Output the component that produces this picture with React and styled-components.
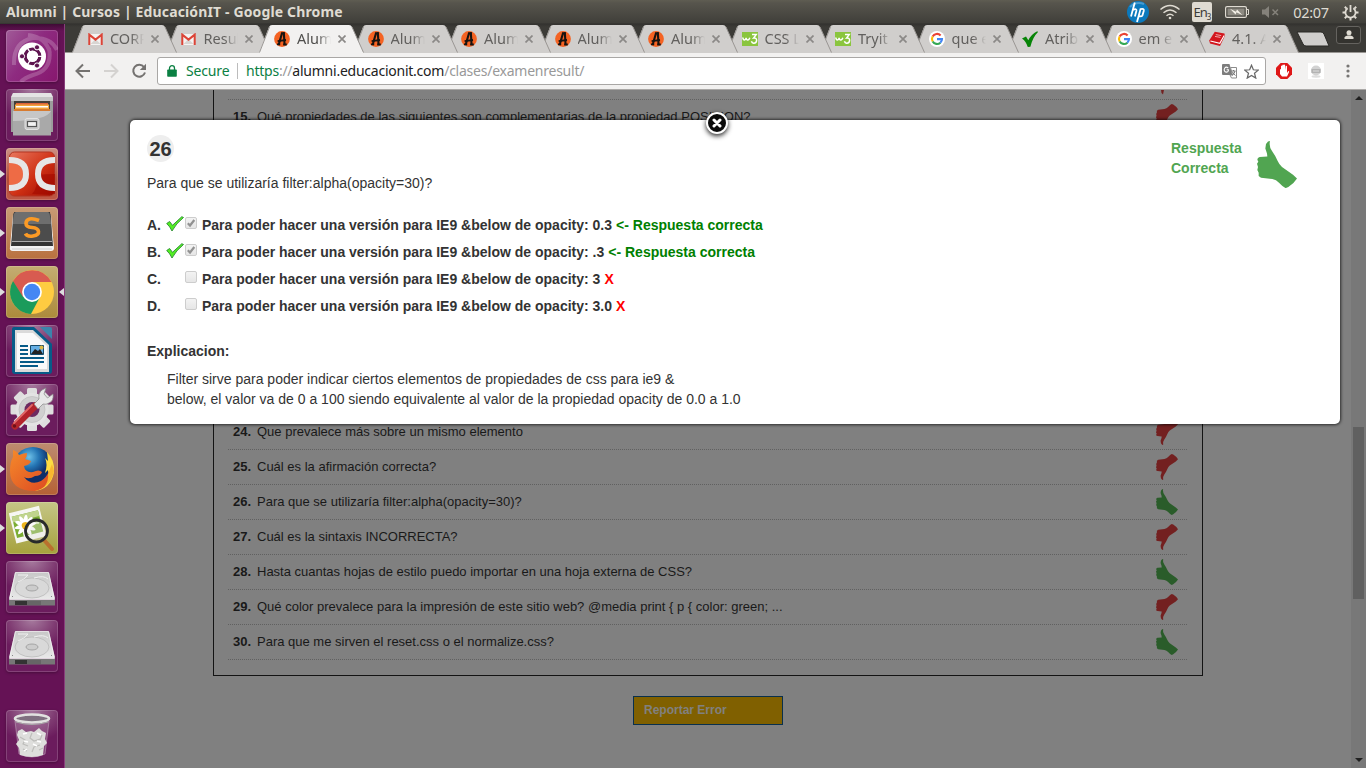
import React from 'react';
import styled, { createGlobalStyle } from 'styled-components';

const GlobalStyle = createGlobalStyle`
  *, *::before, *::after { box-sizing: border-box; }
  body { margin: 0; overflow: hidden; }
  svg { display: block; flex: none; }
`;

const UI_FONT = '"Noto Sans", "Open Sans", sans-serif';
const WEB_FONT = '"Liberation Sans", Arial, sans-serif';

const Desktop = styled.div`
  display: flex;
  flex-direction: column;
  width: 1366px;
  height: 768px;
  overflow: hidden;
  background: #3c3b37;
`;

/* ---------- system panel ---------- */
const Panel = styled.header`
  display: flex;
  align-items: center;
  justify-content: space-between;
  height: 24px;
  flex: none;
  padding: 0 4px 0 6px;
  background: linear-gradient(#5f5d52, #57554d 12%, #403f3a 94%, #33322f);
  font-family: ${UI_FONT};
  color: #dfdbd2;
`;
const WindowTitle = styled.div`
  font-size: 14px;
  font-weight: 700;
  line-height: 24px;
  white-space: nowrap;
  letter-spacing: 0.14px;
`;
const Indicators = styled.div`
  display: flex;
  align-items: center;
`;
const Slot = styled.div`
  display: flex;
  justify-content: center;
  align-items: center;
  width: ${(p) => p.$w}px;
  height: 24px;
`;
const Clock = styled.span`
  font-size: 14.5px;
  letter-spacing: -0.35px;
`;
const Keyboard = styled.div`
  width: 20px;
  height: 20px;
  border-radius: 2px;
  background: #dfdbd2;
  color: #3c3b37;
  font-size: 13px;
  line-height: 20px;
  text-align: center;
  letter-spacing: -1px;
  white-space: nowrap;
  sub { font-size: 8px; line-height: 0; vertical-align: -3px; }
`;

const Workspace = styled.div`
  display: flex;
  flex: 1;
  min-height: 0;
`;

/* ---------- launcher ---------- */
const Launcher = styled.nav`
  display: flex;
  flex-direction: column;
  gap: 7px;
  width: 65px;
  flex: none;
  padding-top: 6px;
  background: linear-gradient(#3f0b35, #651255 7px);
  border-right: 1px solid #883e7b;
`;
const Tile = styled.div`
  position: relative;
  width: 52px;
  height: 52px;
  flex: none;
  margin-left: 6px;
  margin-top: ${(p) => (p.$gap ? 31 : 0)}px;
  border-radius: 4px;
  background: ${(p) => p.$bg || 'radial-gradient(ellipse 75% 60% at 50% 0, #a67a9e, #7f3b72 60%, #6b1c5d)'};
  box-shadow: inset 0 0 0 1px rgba(255, 255, 255, 0.17), 0 1px 3px rgba(0, 0, 0, 0.3);
`;
const Pip = styled.i`
  position: absolute;
  top: 22px;
  ${(p) => (p.$right ? 'right: -6px; border-right: 5px solid #ddd;' : 'left: -6px; border-left: 5px solid #ddd;')}
  border-top: 4.5px solid transparent;
  border-bottom: 4.5px solid transparent;
`;

/* ---------- browser ---------- */
const Browser = styled.main`
  display: flex;
  flex-direction: column;
  flex: 1;
  min-width: 0;
`;
const TabStrip = styled.div`
  display: flex;
  height: 29px;
  flex: none;
  padding: 1px 5px 0 7px;
  background: linear-gradient(#33322f, #3c3b37 3px);
  border-bottom: 1px solid #999693;
  isolation: isolate;
`;
const TabBox = styled.div`
  position: relative;
  z-index: ${(p) => p.$z};
  width: 106px;
  height: 28px;
  flex: none;
  margin-right: -12.5px;
`;
const TabShape = styled.svg`
  position: absolute;
  inset: 0;
`;
const TabRow = styled.div`
  position: relative;
  display: flex;
  align-items: center;
  height: 27px;
  padding-left: 15px;
`;
const TabLabel = styled.span`
  width: 34px;
  margin: 0 7px 0 7px;
  padding-bottom: 1px;
  overflow: hidden;
  white-space: nowrap;
  font: 14.5px/25px ${UI_FONT};
  color: ${(p) => (p.$active ? '#504f4d' : '#62605e')};
  mask-image: linear-gradient(90deg, #000 60%, transparent 100%);
`;
const NewTab = styled.svg`
  margin: 6px 0 0 8px;
`;
const UserButton = styled.div`
  display: flex;
  justify-content: center;
  align-items: center;
  width: 25px;
  height: 18px;
  margin: 1px 0 0 auto;
  border: 1px solid #65635f;
  border-radius: 3px;
  background: #34332f;
`;
const Toolbar = styled.div`
  display: flex;
  align-items: center;
  height: 37px;
  flex: none;
  padding: 0 10px 0 10px;
  background: #f2f1f0;
  border-bottom: 1px solid #aaa8a6;
`;
const NavButtons = styled.div`
  display: flex;
  gap: 12px;
  width: 82px;
`;
const Omnibox = styled.div`
  display: flex;
  align-items: center;
  width: 1109px;
  height: 28px;
  padding: 0 6px 0 9px;
  border: 1px solid #a9a7a5;
  border-radius: 3px;
  background: #fff;
  font: 14px/26px ${UI_FONT};
  white-space: nowrap;
`;
const Secure = styled.span`
  width: 51px;
  margin-left: 9px;
  color: #0b8043;
  letter-spacing: -0.15px;
`;
const Divider = styled.i`
  width: 1px;
  height: 16px;
  background: #bcbcbc;
`;
const Url = styled.span`
  flex: 1;
  margin-left: 8px;
  color: #999;
  letter-spacing: -0.24px;
  em { font-style: normal; color: #0b8043; }
  b { font-weight: 400; color: #222; }
`;
const OmniIcons = styled.div`
  display: flex;
  align-items: center;
  gap: 7px;
`;
const Extensions = styled.div`
  display: flex;
  align-items: center;
  justify-content: space-between;
  flex: 1;
  padding-left: 10px;
`;

/* ---------- page ---------- */
const Viewport = styled.section`
  position: relative;
  display: flex;
  flex: 1;
  min-height: 0;
  overflow: hidden;
  background: #808080;
  font-family: ${WEB_FONT};
`;
const Page = styled.div`
  display: flex;
  flex-direction: column;
  flex: 1;
  overflow: hidden;
`;
const ResultBox = styled.div`
  width: 990px;
  height: 586px;
  flex: none;
  margin-left: 148px;
  padding: 0 15px 0 14px;
  border: solid #131313;
  border-width: 0 1px 1px;
`;
const Row = styled.div`
  display: flex;
  align-items: flex-start;
  height: ${(p) => p.$h || 35}px;
  padding: ${(p) => (p.$h ? 0 : 4)}px 9px 0 5px;
  overflow: hidden;
  border-bottom: 1px dotted #606060;
  font-size: 13px;
  line-height: 26px;
  color: #191919;
`;
const RowNumber = styled.b`
  width: 24px;
`;
const RowText = styled.span`
  flex: 1;
`;
const HiddenRows = styled.div`
  height: ${(p) => p.$rows * 35}px;
`;
const ReportButton = styled.button`
  width: 150px;
  height: 29px;
  margin: 20px 0 0 568px;
  padding: 0 0 2px 10px;
  border: 1px solid #09304d;
  border-radius: 0;
  background: #806000;
  color: #808080;
  font: 700 12px ${WEB_FONT};
  text-align: left;
`;
const Scrollbar = styled.div`
  display: flex;
  flex-direction: column;
  align-items: center;
  width: 15px;
  padding: 6px 0;
  background: #787878;
`;
const ScrollThumb = styled.div`
  width: 11px;
  height: 172px;
  margin: 327px 0 auto;
  background: #606060;
`;

const Modal = styled.article`
  position: absolute;
  left: 65px;
  top: 30px;
  width: 1210px;
  height: 304px;
  padding: 15px 17px;
  border-radius: 5px;
  background: #fff;
  box-shadow: 0 0 3px 1px rgba(0, 0, 0, 0.65);
  color: #333;
  font-size: 14px;
  line-height: 20px;
`;
const CloseButton = styled.div`
  position: absolute;
  left: 576px;
  top: -8px;
  display: flex;
  align-items: center;
  justify-content: center;
  width: 22px;
  height: 22px;
  border: 2px solid #fff;
  border-radius: 50%;
  background: #0b0b0b;
  box-shadow: 0 2px 5px rgba(0, 0, 0, 0.85);
`;
const ModalHead = styled.div`
  display: flex;
  justify-content: space-between;
  height: 38px;
`;
const Badge = styled.div`
  width: 27px;
  height: 27px;
  border-radius: 50%;
  background: #eee;
  font-size: 20px;
  font-weight: 700;
  line-height: 28px;
  text-align: center;
`;
const Verdict = styled.div`
  display: flex;
  gap: 15px;
  height: 55px;
  padding: 3px 26px 0 0;
  color: #51a551;
  font-weight: 700;
  p { margin: 0; width: 71px; }
  svg { margin-top: 3px; }
`;
const Answers = styled.ul`
  margin: 22px 0 0;
  padding: 0;
  list-style: none;
`;
const Answer = styled.li`
  display: flex;
  height: 27px;
  font-weight: 700;
`;
const Letter = styled.span`
  width: 19px;
`;
const Mark = styled.span`
  width: 19px;
  padding-top: 1px;
`;
const Check = styled.span`
  width: 12px;
  height: 12px;
  margin: 2px 5px 0 0;
  border: 1px solid #cdcdcd;
  border-radius: 2px;
  background: linear-gradient(#f3f3f3, #e6e6e6);
`;
const Hint = styled.span`
  margin-left: 4px;
  color: ${(p) => (p.$ok ? '#008000' : '#f00')};
`;
const Explain = styled.h4`
  margin: 18px 0 8px;
  font-size: 14px;
  line-height: 20px;
`;
const ExplainText = styled.p`
  margin: 0 0 0 20px;
`;

/* ---------- drawings ---------- */
const Thumb = ({ size = 22, color, down }) => (
  <svg width={size} height={size * 1.18} viewBox="0 0 120 141">
    <path
      fill={color}
      transform={down ? 'translate(0 141) scale(1 -1)' : undefined}
      d="M39 0 L33 1 L27 9 L25 22 L30 37 L31 46 L8 48 Q1 50 1 56 L4 62 L0 68 L3 78 L1 87 L5 95 L5 105 L12 110 L46 114 Q58 116 66 125 Q78 138 86 141 L94 138 Q110 128 120 112 L108 101 L75 78 Q67 71 62 60 Q55 43 46 31 Q35 16 39 0Z"
    />
  </svg>
);

const Gmail = () => (
  <svg width="15" height="12" viewBox="0 0 15 12">
    <path fill="#f4f3f2" d="M1 1h13v11H1z" />
    <path fill="#d8d5d2" d="M2.5 11 7.5 6l5 5z" />
    <path fill="none" stroke="#dc4437" strokeWidth="2" d="M1.3 12V1.6l6.2 5 6.2-5V12" />
  </svg>
);
const Alumni = () => (
  <svg width="16" height="16" viewBox="0 0 16 16">
    <circle cx="8" cy="8" r="7.9" fill="#f46323" />
    <path fill="none" stroke="#171310" strokeWidth="2.1" d="M4.600 14 8 2.200M9.800 1.200 10.600 14" />
    <path fill="none" stroke="#171310" strokeWidth="1.800" d="M7 2.200h3.800M3.600 10.200 12 9M3 13.300h3.200M9.200 13.500h3.600" />
  </svg>
);
const W3 = () => (
  <svg width="16" height="14" viewBox="0 0 16 14">
    <path fill="#8ac53e" d="M0 0h16v14H0z" />
    <path fill="none" stroke="#fff" strokeWidth="1.5" d="M.8 5.5q.4 3 2 2.4 1.2-.4 1.3-2 .3 2.4 1.9 2 1.3-.3 1.8-2.2M10 2.6h4.2L11.6 6q3.2-.4 3 2.7-.4 2.7-3 2.6-1.6-.2-2.2-2" />
  </svg>
);
const Google = () => (
  <svg width="16" height="16" viewBox="0 0 16 16">
    <circle cx="8" cy="8" r="8" fill="#fff" />
    <g fill="none" strokeWidth="2.1">
      <path stroke="#ea4335" d="M3.6 5.6A5 5 0 0 1 11.6 4.4" />
      <path stroke="#fbbc05" d="M3.7 10.5A5 5 0 0 1 3.6 5.5" />
      <path stroke="#34a853" d="M11.4 11.7A5 5 0 0 1 3.7 10.4" />
      <path stroke="#4285f4" d="M8 8.1h5a5 5 0 0 1-1.7 3.7" />
    </g>
  </svg>
);
const GreenTick = () => (
  <svg width="16" height="16" viewBox="0 0 16 16">
    <path fill="#078407" d="M0 7.5 4 5.5 6.3 9.3Q9 3.4 15.2.2L16 1Q10.4 6.6 8.4 15.8L5.8 16Q4 10.4 0 7.5Z" />
  </svg>
);
const Book = () => (
  <svg width="16" height="16" viewBox="0 0 16 16">
    <path fill="#d3171e" d="M5.8.8 15.5 2.6 15.8 5 11 15 1 12.4.2 9.5Z" />
    <path fill="none" stroke="#fff" strokeWidth="1.100" d="M1.400 10 10.800 12.300 15.200 4.600" />
    <path fill="none" stroke="#f3b7b7" strokeWidth=".9" d="M6.800 3.600l5.400 1M6 5.400l5.400 1" />
  </svg>
);
const favicons = { gmail: Gmail, alumni: Alumni, w3: W3, google: Google, tick: GreenTick, book: Book };

const CloseX = () => (
  <svg width="8" height="8" viewBox="0 0 8 8">
    <path stroke="#8b8987" strokeWidth="1.7" d="m.5.5 7 7m0-7-7 7" />
  </svg>
);

const Disk = () => (
  <svg width="52" height="52" viewBox="0 0 52 52">
    <defs>
      <linearGradient id="disk" x2="0" y2="1"><stop stopColor="#c8c8c8" /><stop offset="1" stopColor="#e9e9e9" /></linearGradient>
    </defs>
    <path fill="#d3d3d3" d="M9 11.500h34l6 26H3z" />
    <path fill="url(#disk)" stroke="#f6f6f6" strokeWidth=".7" d="M9.500 11.500h33l6 27H3.500z" />
    <path fill="#777" d="M3 39h46v5.500H3z" />
    <path fill="#333" d="M9 40h12v4H9z" />
    <path fill="#666" d="M21 40h14v4H21z" />
    <ellipse cx="26" cy="27" rx="17" ry="10" fill="#d9d9d9" stroke="#b4b4b4" strokeWidth=".7" />
    <path fill="none" stroke="#f0f0f0" d="M12 14h10q-4 5-10 7M28 17q10-3 14 1" />
    <ellipse cx="26" cy="27" rx="6" ry="3" fill="#ccc" stroke="#999" strokeWidth=".8" />
    <path fill="#888" d="M6 35h1v1H6zm39 0h1v1h-1z" />
  </svg>
);

const icons = {
  ubuntu: (
    <svg width="52" height="52" viewBox="0 0 52 52">
      <g fill="none" stroke="#fff" strokeOpacity=".2" strokeWidth="4">
        <path d="M8 35Q7 12 27 8q18-1 24 12M43 18q4 22-16 27Q18 48 15 52M22 5q18 2 22 18" />
      </g>
      <circle cx="26" cy="26.500" r="14" fill="#fff" />
      <circle cx="26.500" cy="26.300" r="7.300" fill="none" stroke="#5e1450" strokeWidth="3.200" />
      <path stroke="#fff" strokeWidth="1.300" d="M26.500 26.300 38 26.300M26.500 26.300l-6-10M26.500 26.300l-6 10" />
      <circle cx="26.500" cy="26.300" r="5.500" fill="#fff" />
      <g fill="#5e1450" stroke="#fff"><circle cx="16" cy="26.300" r="2.600" /><circle cx="31" cy="17.300" r="2.600" /><circle cx="31" cy="35.500" r="2.600" /></g>
    </svg>
  ),
  files: (
    <svg width="52" height="52" viewBox="0 0 52 52">
      <path fill="#9c9c9c" d="M7 4h38l2 5v34H5V9z" />
      <path fill="#e4e4e4" d="M7 4h38l2 4H5z" />
      <path fill="#c6c6c6" d="M5 8h42v4H5z" />
      <path fill="#443e39" d="M8 12h36v10H8z" />
      <path fill="#dc633a" d="M10 14h32v7H10z" /><path fill="#f2a53d" d="M9 15.500h34v5H9z" />
      <path fill="#fff" d="M10 17h32v1.500H10z" /><path fill="#d77b30" d="M8 20h36v2H8z" />
      <path fill="#a9a9a9" d="M7 22h38v24.500H7z" /><path fill="#c6c6c6" d="M7 22h38q-4 9-38 10z" />
      <rect x="19" y="29.500" width="14" height="11" rx="2" fill="#c9c9c9" stroke="#e2e2e2" />
      <rect x="21.500" y="32.500" width="9" height="5" fill="#f3f3f3" stroke="#555" strokeWidth="1.200" />
    </svg>
  ),
  dc: (
    <svg width="52" height="52" viewBox="0 0 52 52">
      <defs>
        <linearGradient id="dc" x2="1" y2="1"><stop stopColor="#e8775e" /><stop offset=".55" stopColor="#cf3014" /><stop offset="1" stopColor="#9c0900" /></linearGradient>
      </defs>
      <rect x="3.500" y="4" width="45" height="44" rx="5" fill="url(#dc)" stroke="#b33422" />
      <path fill="#a50b00" opacity=".65" d="M31 27q8-1 18-1v20H26q6-6 5-19Z" />
      <path fill="#ee6b45" d="M3 15q14 0 14 11T3 37z" />
      <g fill="none" stroke="#e6e6e6" strokeWidth="6"><path d="M3 12Q20 12 20 26T3 40M49 12Q32 12 32 26T49 40" /></g>
    </svg>
  ),
  sublime: (
    <svg width="52" height="52" viewBox="0 0 52 52">
      <path fill="#f2f2f2" d="M7 8h38l3 33q0 3-3 3H7q-4 0-3-4z" />
      <path fill="#333" d="M8 5h36l3 34H5z" />
      <path fill="#4c4c4c" d="M10 5h32q2 0 3 4l1 25H6L7 9q0-4 3-4z" />
      <path fill="#858585" opacity=".6" d="M10 5h32q2 0 3 12H7q0-12 3-12z" />
      <path stroke="#aaa" d="M6 34.500h40" /><path stroke="#ccc" strokeWidth="1" d="M6 42h40" />
      <path fill="none" stroke="#fb9a25" strokeWidth="3.600" d="M33 13.500q-6-2.500-9.500-1.500t-3.500 4.500 6 4 6.500 4-5.500 4.500-7.500-2.500" />
    </svg>
  ),
  chrome: (
    <svg width="52" height="52" viewBox="0 0 52 52">
      <circle cx="26" cy="26" r="22" fill="#fecb41" />
      <path fill="#1b9b5b" d="M26 26 7 15a22 22 0 0 0 18 33l9-17z" />
      <path fill="#d85b50" d="M7 15 17 31l9-15h19.500A22 22 0 0 0 7 15Z" />
      <circle cx="26" cy="26" r="9.900" fill="#fff" /><circle cx="26" cy="26" r="8.200" fill="#4587f3" />
    </svg>
  ),
  writer: (
    <svg width="52" height="52" viewBox="0 0 52 52">
      <path fill="#075b88" d="M8 2h20l18 17v27q0 3-3 3H9q-3 0-3-3V4q0-2 2-2z" />
      <path fill="#3c84ab" d="M34 2h10q2 0 2 2v10z" />
      <path fill="#dadada" d="M9 5h18l16 15v27H9z" /><path fill="#fafafa" d="M11 8h16l14 13v23H11z" />
      <g stroke="#075b88" strokeWidth="2"><path d="M14 21h8m-8 4h8m-8 4h8m-8 4h24m-24 4h24m-24 4h18" /></g>
      <path fill="#65afe5" stroke="#174b6a" strokeWidth="1" d="M24.500 20.500h13v9h-13z" /><path fill="#222" d="m25 29 4-5 3 2 2-2 3 5z" /><circle cx="35.500" cy="22.500" r="2" fill="#ddb845" />
    </svg>
  ),
  settings: (
    <svg width="52" height="52" viewBox="0 0 52 52">
      <g fill="#dedede">
        {[0, 45, 90, 135].map((a) => <rect key={a} x="21" y="4" width="10" height="43" rx="1.500" transform={`rotate(${a} 26 25.500)`} />)}
      </g>
      <circle cx="26" cy="25.500" r="16.500" fill="#e3e3e3" /><circle cx="26" cy="25.500" r="13" fill="#d0d0d0" stroke="#bdbdbd" strokeWidth=".7" /><circle cx="26" cy="25.500" r="7.500" fill="#6d2a60" />
      <path stroke="#b3242b" strokeWidth="7" strokeLinecap="round" d="M9 42 29 22" />
      <path stroke="#e06868" strokeWidth="1.800" strokeLinecap="round" d="M8 39 26 21" />
      <path fill="#e8e8e8" stroke="#888" strokeWidth=".7" d="m28 20 5-5q-1-6 3-9l4-2-2 6 3.500 4 5.500-4q1 7-4 9-3 2-6 1l-5 5z" />
      <circle cx="8.500" cy="42" r="1.700" fill="#6e1119" />
    </svg>
  ),
  firefox: (
    <svg width="52" height="52" viewBox="0 0 52 52">
      <defs>
        <radialGradient id="globe" cx=".4" cy=".25"><stop stopColor="#6ec1e8" /><stop offset=".5" stopColor="#2475b4" /><stop offset="1" stopColor="#0d2e69" /></radialGradient>
        <linearGradient id="fox" x2="1" y2="1"><stop stopColor="#f58a2b" /><stop offset="1" stopColor="#dc4822" /></linearGradient>
      </defs>
      <circle cx="27" cy="24" r="20" fill="url(#globe)" />
      <path fill="#fddc42" d="M41 9q8 8 7 20-3 18-21 19 17-6 15-21l-3 3q3-9 0-15l3 3z" />
      <path fill="url(#fox)" d="M7 7q4 1 6 5 5-2 8-2 0 4-2 6l6 2q-1 4-7 5 1 7 9 6 6-3 9 0-1 4-7 4-6 4-11 1 7 9 17 4 6-4 8-10l3 2q-3 15-17 18Q4 48 4 28q0-9 3-14z" />
      <path fill="#f9b72f" d="m42 31 4-10 2 7q-2 11-10 16 5-6 4-13z" />
    </svg>
  ),
  viewer: (
    <svg width="52" height="52" viewBox="0 0 52 52">
      <g transform="rotate(-14 22 22)">
        <path fill="#f6f6f2" d="M6 7h31v31H6z" /><path fill="#7bad34" d="M8 11h27v22H8z" /><path fill="#c0d48d" d="M8 11h27v6H8z" />
        <g fill="#fff">
          {[0, 36, 72, 108, 144].map((a) => <ellipse key={a} cx="19" cy="23" rx="11" ry="2.600" transform={`rotate(${a} 19 23)`} />)}
        </g>
        <circle cx="19" cy="23" r="3.600" fill="#edb51d" />
      </g>
      <path stroke="#b9712e" strokeWidth="4" strokeLinecap="round" d="m38 38 8 9" />
      <circle cx="30.500" cy="29" r="11" fill="#e3e3dc" fillOpacity=".35" stroke="#282a2b" strokeWidth="2.800" />
      <path stroke="#fff" strokeOpacity=".7" strokeWidth="1.500" fill="none" d="M23 27q2-7 10-6" />
    </svg>
  ),
  disk: <Disk />,
  trash: (
    <svg width="52" height="52" viewBox="0 0 52 52">
      <path fill="#c9a9c2" fillOpacity=".25" stroke="#c9b4c5" strokeOpacity=".5" d="m9 11 4 33q13 6 26 0l4-33z" />
      <path fill="#dededc" d="m12 21 4-2 4 3 5-1 3 1 5-4 3 3 4 2-1 6 2 4-3 3-1 9q-11 4-23 0l-1-7-3-4 3-4-2-5z" />
      <path fill="none" stroke="#bdbdba" strokeWidth="1.200" d="m14 27 5 3-2 4 5 2m4-13-2 5 4 3 6-2m2-4-2 5m0 5-6 2-2 5m-9-3 4 2m12-1 4-2" />
      <path fill="none" stroke="#fff" strokeWidth="1.500" d="m17 24 4-1m10 0 4 2m-17 6 4 1m5 2 4 2m-13 5 3-2m10-8 4 1" />
      <ellipse cx="26" cy="8.500" rx="17" ry="4" fill="#807080" stroke="#e2e2e0" strokeWidth="2.600" /><path stroke="#aaa" fill="none" d="M10 12q16 5 32 0" />
    </svg>
  ),
};

const tabs = [
  ['gmail', 'CORR'], ['gmail', 'Resul'], ['alumni', 'Alumn', true], ['alumni', 'Alumn'], ['alumni', 'Alumn'], ['alumni', 'Alumn'], ['alumni', 'Alumn'],
  ['w3', 'CSS L'], ['w3', 'Tryit'], ['google', 'que e'], ['tick', 'Atribu'], ['google', 'em e'], ['book', '4.1. A'],
];

const apps = [
  ['ubuntu', 'linear-gradient(125deg, #a15b98, #8e2b80 45%, #87176e)'],
  ['files'],
  ['dc', 'linear-gradient(#cc9185, #b34c38 60%, #bf5745)', 1],
  ['sublime', 'linear-gradient(#c89b76, #b9713f)', 1],
  ['chrome', 'linear-gradient(#c4ad72, #ac8b3b)', 2],
  ['writer'],
  ['settings'],
  ['firefox', 'linear-gradient(#bd8b70, #b56135)', 1],
  ['viewer', 'linear-gradient(#c5c686, #a6a13d)', 1],
  ['disk'],
  ['disk'],
  ['trash'],
];

const laterRows = [
  [24, 'Que prevalece más sobre un mismo elemento', false],
  [25, 'Cuál es la afirmación correcta?', false],
  [26, 'Para que se utilizaría filter:alpha(opacity=30)?', true],
  [27, 'Cuál es la sintaxis INCORRECTA?', false],
  [28, 'Hasta cuantas hojas de estilo puedo importar en una hoja externa de CSS?', true],
  [29, 'Qué color prevalece para la impresión de este sitio web? @media print { p { color: green; ...', false],
  [30, 'Para que me sirven el reset.css o el normalize.css?', true],
];

const answers = [
  ['A.', '0.3', true],
  ['B.', '.3', true],
  ['C.', '3', false],
  ['D.', '3.0', false],
];

function Tab({ icon, label, active, z }) {
  const Icon = favicons[icon];
  return (
    <TabBox $z={z}>
      <TabShape width="106" height="28" viewBox="0 0 106 28">
        <path d="M0 28 10 2Q11 0 13 0H90Q92 0 93 2L104.500 28Z" fill={active ? '#f2f1f0' : '#d0cecc'} />
        <path d="M.5 27.500 10.500 2M93 2 104.500 27.500" fill="none" stroke="#999693" />
      </TabShape>
      <TabRow>
        <Slot $w={16}><Icon /></Slot>
        <TabLabel $active={active}>{label}</TabLabel>
        <CloseX />
      </TabRow>
    </TabBox>
  );
}

function ResultRow({ n, text, ok }) {
  return (
    <Row>
      <RowNumber>{n}.</RowNumber>
      <RowText>{text}</RowText>
      <Thumb color={ok ? '#2a5c2a' : '#732020'} down={!ok} />
    </Row>
  );
}

export default function App() {
  return (
    <Desktop>
      <GlobalStyle />
      <Panel>
        <WindowTitle>Alumni | Cursos | EducaciónIT - Google Chrome</WindowTitle>
        <Indicators>
          <Slot $w={32}>
            <svg width="22" height="22" viewBox="0 0 22 22">
              <circle cx="11" cy="11" r="11" fill="#0b79bd" />
              <path d="M3 6Q9 0 17 3" stroke="#6fb4dd" strokeWidth="2" fill="none" opacity=".6" />
              <path d="M7.800 1.500 4 15.500M6 8.800q4-1.600 3.400 1L7.900 15.500M13.700 7.500 10 21M13.500 8.200q3.800-1 3.300 1.500l-1.300 4.600q-.5 1.200-3.400 1" fill="none" stroke="#fff" strokeWidth="1.800" />
            </svg>
          </Slot>
          <Slot $w={32}>
            <svg width="22" height="16" viewBox="0 0 22 16" fill="none" stroke="#dfdbd2" strokeWidth="1.500">
              <path d="M1.500 5.500q9.500-8 19 0M4.500 8.700q6.500-5.500 13 0M7.500 11.700q3.500-3 7 0" />
              <circle cx="11" cy="14" r="1.300" fill="#dfdbd2" stroke="none" />
            </svg>
          </Slot>
          <Slot $w={32}><Keyboard>En<sub>3</sub></Keyboard></Slot>
          <Slot $w={38}>
            <svg width="24" height="12" viewBox="0 0 24 12">
              <rect x=".6" y=".6" width="20.800" height="10.800" rx="1.500" fill="none" stroke="#dfdbd2" strokeWidth="1.200" />
              <path d="M22 3.500h1.500v5H22" fill="none" stroke="#dfdbd2" />
              <path d="M2.500 2.500h17v7h-17Z" fill="#8d8a82" />
              <path d="m5 2.800 6 2.900 1-2.200 5.500 5.700-6-2.900-1 2.200z" fill="#f4f0e8" />
            </svg>
          </Slot>
          <Slot $w={28}>
            <svg width="17" height="12" viewBox="0 0 17 12">
              <path d="M0 3.500h3L7 0v12L3 8.500H0Z" fill="#85827b" /><path d="m10.500 3.500 5.500 5.500m0-5.500-5.500 5.500" stroke="#85827b" strokeWidth="1.500" />
            </svg>
          </Slot>
          <Slot $w={54}><Clock>02:07</Clock></Slot>
          <Slot $w={24}>
            <svg width="17" height="17" viewBox="0 0 17 17" fill="none" stroke="#dfdbd2">
              <path strokeWidth="1.800" d="M5.700 4.200a5.100 5.100 0 1 0 5.600 0M8.500 1v7" />
              <path strokeWidth="2" d="M8.500 13.800V16.500M.5 8.500h3M13.500 8.500h3M2.800 2.800 4.600 4.600M14.200 2.800 12.400 4.600M2.800 14.200 4.900 12.100M14.200 14.200 12.100 12.100" />
            </svg>
          </Slot>
        </Indicators>
      </Panel>

      <Workspace>
        <Launcher>
          {apps.map(([name, bg, pips], i) => (
            <Tile key={i} $bg={bg} $gap={name === 'trash'}>
              {pips > 0 && <Pip />}
              {icons[name]}
              {pips > 1 && <Pip $right />}
            </Tile>
          ))}
        </Launcher>

        <Browser>
          <TabStrip>
            {tabs.map(([icon, label, active], i) => (
              <Tab key={i} icon={icon} label={label} active={active} z={active ? 30 : 20 - i} />
            ))}
            <NewTab width="34" height="17" viewBox="0 0 34 17">
              <path d="M1 1h24q2 0 3 2l5 12H10q-2 0-3-2Z" fill="#d0cecc" stroke="#292825" />
            </NewTab>
            <UserButton>
              <svg width="10" height="10" viewBox="0 0 10 10" fill="#dfdbd2"><circle cx="5" cy="2.800" r="2.500" /><path d="M.5 9V7.500Q1 6 3.500 5.500h3Q9 6 9.500 7.500V9Z" /></svg>
            </UserButton>
          </TabStrip>

          <Toolbar>
            <NavButtons>
              <svg width="16" height="16" viewBox="0 0 16 16" fill="none" stroke="#747270" strokeWidth="2"><path d="M15 8H2.500M8 1.500 1.500 8 8 14.500" /></svg>
              <svg width="16" height="16" viewBox="0 0 16 16" fill="none" stroke="#d4d2d0" strokeWidth="2"><path d="M1 8h12.500M8 1.500 14.500 8 8 14.500" /></svg>
              <svg width="16" height="16" viewBox="0 0 16 16"><path fill="none" stroke="#747270" strokeWidth="2" d="M13 4A6 6 0 1 0 14 9.500" /><path d="M15 .8v6.200H8.800Z" fill="#747270" /></svg>
            </NavButtons>
            <Omnibox>
              <svg width="10" height="12" viewBox="0 0 10 12"><path fill="#0b8043" d="M1 4.500h8q.8 0 .8.800V11q0 .8-.8.800H1q-.8 0-.8-.8V5.300q0-.8.800-.8z" /><path d="M2.500 5V3.200a2.500 2.500 0 0 1 5 0V5" fill="none" stroke="#0b8043" strokeWidth="1.300" /></svg>
              <Secure>Secure</Secure>
              <Divider />
              <Url><em>https</em>://<b>alumni.educacionit.com</b>/clases/examenresult/</Url>
              <OmniIcons>
                <svg width="15" height="15" viewBox="0 0 15 15">
                  <path fill="#7d7d7d" d="M1 0h6.500l3 11H1q-1 0-1-1V1q0-1 1-1z" />
                  <path fill="#fff" stroke="#8c8c8c" d="M8.500 3.500h6v10.500H9.500L8 11h2.500z" />
                  <path fill="none" stroke="#fff" strokeWidth="1.100" d="M6.200 4q-2-1.600-3.400 0-1.300 2 0 3.500 2 1.500 3.500-.5l.1-1.200H4.600" />
                  <path fill="none" stroke="#777" d="M9.500 7h4M11.500 6v1M10 11.500q2.500-1.500 3-4.500M10.500 8q1 2 3 3.500" />
                </svg>
                <svg width="15" height="15" viewBox="0 0 24 24"><path fill="none" stroke="#686868" strokeWidth="2" d="m12 2 3 7.200 7.800.6-6 5 2 7.700-6.800-4.200-6.800 4.200 2-7.700-6-5 7.800-.6z" /></svg>
              </OmniIcons>
            </Omnibox>
            <Extensions>
              <svg width="16" height="16" viewBox="0 0 16 16">
                <path fill="#df1717" d="M4.700 0h6.600L16 4.700v6.600L11.300 16H4.700L0 11.300V4.700z" />
                <path fill="#fff" d="M4 6.500q1-1 1 .5V3q1-1 1.300 0v3.500V2q1-1 1.400 0v4.500V2q1-1 1.400 0v5L9.700 3q1-.7 1.300.2V10l1.300-2q1.200 0 .7 1.300L11 13.500H6L4 11z" />
              </svg>
              <svg width="16" height="16" viewBox="0 0 16 16">
                <path fill="#fff" d="M0 0h16v16H0z" /><ellipse cx="8" cy="13.500" rx="4.500" ry="1.200" fill="#ddd" />
                <circle cx="8" cy="7.500" r="5" fill="#d2d2d2" /><path fill="#b3b3b3" d="M3.500 6h9v4h-9z" /><path stroke="#ddd" d="M5 8h6" />
              </svg>
              <svg width="16" height="16" viewBox="0 0 16 16" fill="#777573"><circle cx="8" cy="3" r="1.600" /><circle cx="8" cy="8" r="1.600" /><circle cx="8" cy="13" r="1.600" /></svg>
            </Extensions>
          </Toolbar>

          <Viewport>
            <Page>
              <ResultBox>
                <Row $h={10}>
                  <RowText />
                  <svg width="22" height="5" viewBox="0 0 22 5"><path d="M5 0h3L7 4.500 5.500 3Z" fill="#732020" /></svg>
                </Row>
                <ResultRow n={15} text="Qué propiedades de las siguientes son complementarias de la propiedad POSITION?" ok={false} />
                <HiddenRows $rows={8} />
                {laterRows.map(([n, text, ok]) => <ResultRow key={n} n={n} text={text} ok={ok} />)}
              </ResultBox>
              <ReportButton>Reportar Error</ReportButton>
            </Page>
            <Scrollbar>
              <svg width="8" height="4" viewBox="0 0 8 4"><path d="m0 4 4-4 4 4z" fill="#202020" /></svg>
              <ScrollThumb />
              <svg width="8" height="4" viewBox="0 0 8 4"><path d="m0 0 4 4 4-4z" fill="#202020" /></svg>
            </Scrollbar>

            <Modal>
              <CloseButton>
                <svg width="10" height="10" viewBox="0 0 10 10"><path d="m2 2 6 6m0-6-6 6" stroke="#fff" strokeWidth="3" strokeLinecap="round" /></svg>
              </CloseButton>
              <ModalHead>
                <Badge>26</Badge>
                <Verdict>
                  <p>Respuesta Correcta</p>
                  <Thumb size={40} color="#51a551" />
                </Verdict>
              </ModalHead>
              <div>Para que se utilizaría filter:alpha(opacity=30)?</div>
              <Answers>
                {answers.map(([letter, value, ok]) => (
                  <Answer key={letter}>
                    <Letter>{letter}</Letter>
                    <Mark>
                      {ok && (
                        <svg width="18" height="16" viewBox="0 0 18 16">
                          <path d="M.7 7.500 3.600 5.500 6.500 9.300 15.800.7l1.700.8Q10 7.500 6 15 4 10.500.7 7.500Z" fill="#52ee22" stroke="#2b8a33" strokeWidth=".9" />
                        </svg>
                      )}
                    </Mark>
                    <Check>
                      {ok && <svg width="10" height="10" viewBox="0 0 10 10"><path d="M1.800 5.300 4 7.500 8.300 2" fill="none" stroke="#929292" strokeWidth="2.200" /></svg>}
                    </Check>
                    <span>Para poder hacer una versión para IE9 &amp;below de opacity: {value}</span>
                    <Hint $ok={ok}>{ok ? '<- Respuesta correcta' : 'X'}</Hint>
                  </Answer>
                ))}
              </Answers>
              <Explain>Explicacion:</Explain>
              <ExplainText>
                Filter sirve para poder indicar ciertos elementos de propiedades de css para ie9 &amp;<br />
                below, el valor va de 0 a 100 siendo equivalente al valor de la propiedad opacity de 0.0 a 1.0
              </ExplainText>
            </Modal>
          </Viewport>
        </Browser>
      </Workspace>
    </Desktop>
  );
}
